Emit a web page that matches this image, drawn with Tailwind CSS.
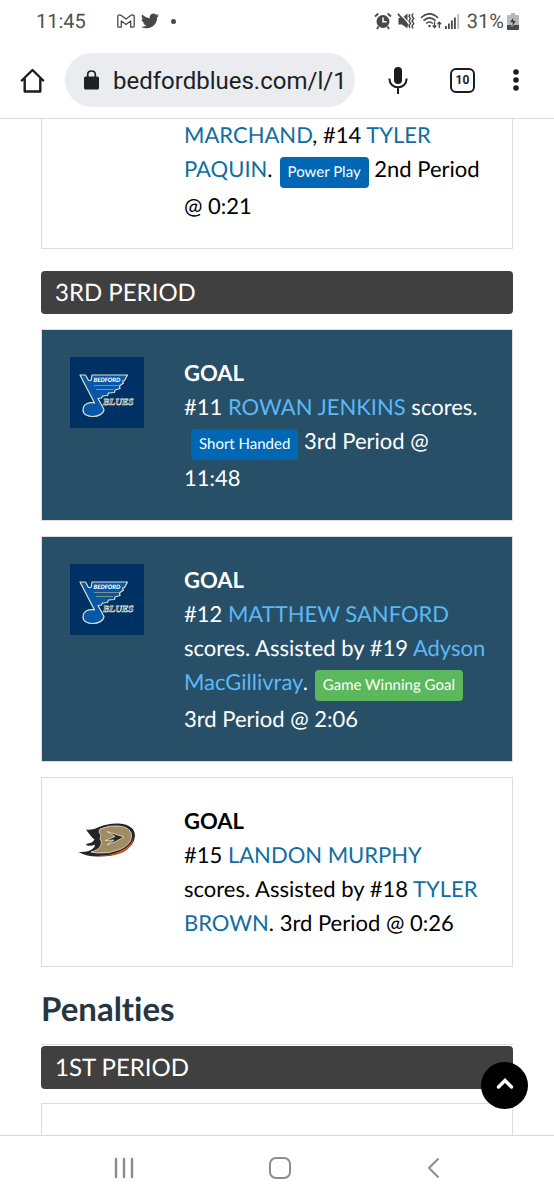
<!DOCTYPE html>
<html lang="en">
<head>
  <meta charset="UTF-8" />
  <meta name="viewport" content="width=device-width, initial-scale=1" />
  <title>Bedford Blues - Game Summary</title>
  <script src="https://cdn.jsdelivr.net/npm/@tailwindcss/browser@4"></script>
</head>
<body class="h-screen flex flex-col bg-white overflow-hidden font-['Lato',sans-serif] text-[22px] leading-[34px] text-black [text-rendering:geometricPrecision] [font-variant-ligatures:none]">
  <!-- Status bar -->
  <div class="flex items-center justify-between h-[42px] shrink-0 pl-9 pr-[35px] font-['Roboto',sans-serif] text-xl text-[#505050]">
    <div class="flex items-center">
      <span>11:45</span>
      <svg class="ml-[31px] w-[18px] h-[14px]" viewBox="0 0 18 14" fill="none" stroke="#484848" stroke-width="1.3" stroke-linejoin="round">
        <path d="M.8 3.2V12q0 1.2 1.2 1.2h2.3V7L9 10.500l4.700-3.500v6.200H16q1.200 0 1.200-1.200V3Q17.200.8 15.400.8q-.9 0-1.700.6L9 5 4.300 1.400Q2 0 .8 2z" />
      </svg>
      <svg class="ml-[6px] w-[18px] h-[18px]" viewBox="0 0 24 24" fill="#484848">
        <path d="M23.950 4.570a10 10 0 0 1-2.820.770 4.960 4.960 0 0 0 2.160-2.720 9.900 9.900 0 0 1-3.120 1.180 4.920 4.920 0 0 0-8.380 4.480C7.690 8.090 4.070 6.130 1.640 3.160a4.820 4.820 0 0 0-.670 2.480c0 1.710.870 3.210 2.190 4.100a4.900 4.900 0 0 1-2.230-.620v.060a4.920 4.920 0 0 0 3.950 4.830 5 5 0 0 1-2.210.080 4.940 4.940 0 0 0 4.600 3.420A9.870 9.870 0 0 1 0 19.540a14 14 0 0 0 7.550 2.210c9.050 0 14-7.500 14-13.980 0-.210 0-.420-.020-.630a9.940 9.940 0 0 0 2.460-2.550z" />
      </svg>
      <span class="ml-3 size-[5px] rounded-full bg-[#484848]"></span>
    </div>
    <div class="flex items-center">
      <!-- alarm -->
      <svg class="w-[18px] h-[18px]" viewBox="0 0 18 18" fill="none">
        <circle cx="9" cy="9.500" r="6.500" fill="#484848" />
        <path d="M9 5.500v4.300h3.500" stroke="#fff" stroke-width="1.500" />
        <path d="M1 4.500 4.300 1.500M17 4.500l-3.300-3M4.500 14.500 3 17M13.500 14.500 15 17" stroke="#484848" stroke-width="1.800" />
      </svg>
      <!-- muted, vibrate -->
      <svg class="ml-[5px] w-[18px] h-[18px]" viewBox="0 0 18 18" fill="none" stroke="#484848">
        <path d="M1.500 6H5l5.500-4.500v15L5 12.500H1.500z" fill="#484848" stroke="none" />
        <path d="m3 1.300 8.500 9.700" stroke="#fff" stroke-width="1.200" />
        <path d="m1 1.800 10 11.500" stroke-width="1.800" />
        <path d="m13 2-1 2.300 1.500 2.300L12 8.900l1.500 2.300-1.500 2.300 1 2.500M16 1.500 15 4l1.700 2.500L15 9l1.700 2.500L15 14l1 2.500" stroke-width="1.400" />
      </svg>
      <!-- wifi -->
      <svg class="ml-[5px] w-[22px] h-[18px]" viewBox="0 0 22 18" fill="none" stroke="#484848" stroke-width="1.600">
        <path d="M1 5.800q8.500-8 17 0M3.500 8.700q6-5.500 12 0M6.200 11.500q3.300-3 6.600 0" />
        <circle cx="9.500" cy="14" r="1.200" fill="#484848" stroke="none" />
        <path d="M14.500 9.500v6M12.700 13.500l1.800 2 1.800-2M19.300 16v-5.500M17.500 12.300l1.800-2 1.800 2" stroke-width="1.300" />
      </svg>
      <!-- signal -->
      <svg class="ml-[3px] w-[15px] h-[16px]" viewBox="0 0 15 16" fill="#484848">
        <path d="M0 13h1.800v3H0zM3 10.500h1.800V16H3zM6 7.500h1.800V16H6zM9 4.500h1.800V16H9z" />
        <path d="M12.300 1h1.800v15h-1.800z" fill="#bbb" />
      </svg>
      <span class="ml-[7px]">31%</span>
      <!-- battery -->
      <svg class="ml-[3px] w-[12px] h-[17px]" viewBox="0 0 12 17">
        <path d="M4 0h4v2h3q1 0 1 1v13q0 1-1 1H1q-1 0-1-1V3q0-1 1-1h3z" fill="#b8b8b8" />
        <path d="M0 12h12v4q0 1-1 1H1q-1 0-1-1z" fill="#484848" />
        <path d="M7 3.500 2.500 9.500h3L4.700 14l4.800-6.300H6.400z" fill="#303030" stroke="#ddd" stroke-width=".5" />
      </svg>
    </div>
  </div>

  <!-- Browser toolbar -->
  <header class="flex items-center h-[77px] shrink-0 pl-5 pr-[35px] border-b border-[#d8d8d8] font-['Roboto',sans-serif] text-[#202124]">
    <button type="button" aria-label="Home">
      <svg class="w-[25px] h-[25px]" viewBox="0 0 25 25" fill="none" stroke="#1b1c1e" stroke-width="2.400" stroke-linejoin="round" stroke-linecap="round">
        <path d="M1.800 12.500 12.500 2l10.700 10.500M4.700 10.500v13h15.600v-13" />
      </svg>
    </button>
    <div class="flex-1 min-w-0 flex items-center h-[54px] ml-5 pl-[19px] pr-2 rounded-full bg-[#ebecf0]">
      <svg class="shrink-0 w-[15px] h-[20px]" viewBox="0 0 15 20">
        <rect y="6.500" width="15" height="13" rx="1.500" fill="#202124" />
        <path d="M3.700 8V4.500q0-3.500 3.800-3.500t3.800 3.500V8" fill="none" stroke="#202124" stroke-width="1.700" />
      </svg>
      <input type="text" aria-label="Address" value="bedfordblues.com/l/1" class="flex-1 min-w-0 ml-[14px] pt-[2px] text-2xl bg-transparent outline-none" />
    </div>
    <button type="button" aria-label="Voice search" class="ml-[33px]">
      <svg class="w-[20px] h-[28px]" viewBox="0 0 20 28" fill="none" stroke="#1b1c1e" stroke-width="2">
        <rect x="6" y="1" width="8" height="17" rx="4" fill="#1b1c1e" stroke="none" />
        <path d="M1.500 12.500v1a8.500 7.800 0 0 0 17 0v-1M10 21.500V28" />
      </svg>
    </button>
    <button type="button" aria-label="Open tabs" class="ml-[42px] flex items-center justify-center size-[25px] rounded-[6px] border-2 border-[#1b1c1e] text-xs font-bold">10</button>
    <button type="button" aria-label="Menu" class="ml-[38px]">
      <svg class="w-[6px] h-[22px]" viewBox="0 0 6 22" fill="#1b1c1e">
        <circle cx="3" cy="3" r="2.800" /><circle cx="3" cy="11" r="2.800" /><circle cx="3" cy="19" r="2.800" />
      </svg>
    </button>
  </header>

  <!-- Page content -->
  <div class="relative flex-1 min-h-0">
    <main class="h-full overflow-hidden px-[41px]">
      <div class="flex -mt-px pl-[28px] pr-[25px] pb-[25px] border border-t-0 border-[#ddd]">
        <div class="w-[114px] shrink-0"></div>
        <p><a href="#" class="text-[#0f6e9f]">MARCHAND</a>, #14 <a href="#" class="text-[#0f6e9f]">TYLER PAQUIN</a>.<span class="inline-block ml-[7px] mb-px px-2 rounded-sm bg-[#0067b5] text-white text-[15px] leading-[31px]">Power Play</span> 2nd Period @ 0:21</p>
      </div>

      <h3 class="mt-[22px] px-[14px] py-1 text-2xl leading-[35px] rounded-sm bg-[#404040] text-white">3RD PERIOD</h3>

      <div class="flex mt-[15px] pl-[28px] pr-[25px] pt-[26px] pb-[25px] border border-[#ddd] bg-[#284f68] text-white">
        <div class="w-[114px] shrink-0 pt-px">
          <svg class="w-[74px] h-[71px]" viewBox="0 0 74 71">
            <defs>
              <g id="blues">
                <rect width="74" height="71" fill="#003164" />
                <path d="M10 18h5.500l3 5.500 2.500 0 1-5.500h35.500l-3 5.500-2 .5 1 2-4 3 .5 2.500-5 1.500-.5 2.500-6 .5-1 2.500-5 .5-1 2-3.500.5 6 11c-1 9-21 9.500-21 .5 0-6 6-8.500 11.500-7z" fill="#0757a8" stroke="#dfe3c2" stroke-width="1.200" stroke-linejoin="round" />
                <path d="M24 28.500h25M26 32.500h17" stroke="#a9ae80" stroke-width=".7" />
                <text x="23.500" y="24.500" font-family="Lato, sans-serif" font-size="6" font-weight="900" font-style="italic" fill="#fff">BEDFORD</text>
                <text x="33" y="47.500" font-family="Liberation Serif, serif" font-size="9.500" font-weight="700" font-style="italic" fill="#12385e" stroke="#d9ddc8" stroke-width=".7">BLUES</text>
              </g>
            </defs>
            <use href="#blues" />
          </svg>
        </div>
        <div>
          <h4 class="font-bold">GOAL</h4>
          <p>#11 <a href="#" class="text-[#5bb8f5]">ROWAN JENKINS</a> scores.<span class="inline-block ml-[7px] mb-px px-2 rounded-sm bg-[#0067b5] text-white text-[15px] leading-[31px]">Short Handed</span> 3rd Period @ 11:48</p>
        </div>
      </div>

      <div class="flex mt-[15px] pl-[28px] pr-[25px] pt-[26px] pb-[25px] border border-[#ddd] bg-[#284f68] text-white">
        <div class="w-[114px] shrink-0 pt-px">
          <svg class="w-[74px] h-[71px]" viewBox="0 0 74 71"><use href="#blues" /></svg>
        </div>
        <div>
          <h4 class="font-bold">GOAL</h4>
          <p>#12 <a href="#" class="text-[#5bb8f5]">MATTHEW SANFORD</a> scores. Assisted by #19 <a href="#" class="text-[#5bb8f5]">Adyson MacGillivray</a>.<span class="inline-block ml-[7px] mb-px px-2 rounded-sm bg-[#5cb85c] text-white text-[15px] leading-[31px]">Game Winning Goal</span> 3rd Period @ 2:06</p>
        </div>
      </div>

      <div class="flex mt-[15px] pl-[28px] pr-[25px] py-[26px] border border-[#ddd]">
        <div class="w-[114px] shrink-0 pt-px">
          <svg class="w-[74px] h-[71px]" viewBox="0 0 74 71">
            <path d="M16 24.500q7 1 13-2.500 9-4 20-3.500Q65 20 65 31 64 41 53 47q-12 5-26 4.500-10 0-18.500-4.500 10 .5 14.500-3.500 2-2 2-4-3 2-8 1l-1-1.500q7-1 8.500-4.500-3-2-8.500-10z" fill="#262225" />
            <path d="M27 50.500q12 .5 23-4.500 13-6 13.500-15 .5 11-12 17-11 4.500-24.500 2.500z" fill="#c9502b" />
            <path d="M30 24q9-4 19-3 13 1.500 12.500 10.500Q61 39 51 44q-11 5-24 4l-6-1q8-2 10-7 1-4-1-6 2-4-1-7z" fill="#a18c61" stroke="#e8e2d2" stroke-width=".8" />
            <path d="m37 26.500 17 5.500q-8 5-17 8l7-5-9 .500 10-4z" fill="#2c2728" stroke="#e8e2d2" stroke-width=".8" />
          </svg>
        </div>
        <div>
          <h4 class="font-bold">GOAL</h4>
          <p>#15 <a href="#" class="text-[#0f6e9f]">LANDON MURPHY</a> scores. Assisted by #18 <a href="#" class="text-[#0f6e9f]">TYLER BROWN</a>. 3rd Period @ 0:26</p>
        </div>
      </div>

      <h2 class="pt-[21px] pb-[14px] border-b border-[#ddd] text-[33px] leading-[42px] font-bold text-[#263640]">Penalties</h2>
      <h3 class="mt-px px-[14px] py-1 text-2xl leading-[35px] rounded-sm bg-[#404040] text-white">1ST PERIOD</h3>
      <div class="mt-[14px] h-24 border border-[#ddd]"></div>
    </main>
    <button type="button" aria-label="Back to top" class="absolute right-[26px] bottom-[26px] flex items-center justify-center size-[47px] rounded-full bg-black">
      <svg class="w-[18px] h-[18px]" viewBox="0 0 18 18" fill="none" stroke="#fff" stroke-width="3.400" stroke-linecap="round">
        <path d="m2.500 10 6.500-6.500 6.500 6.500" />
      </svg>
    </button>
  </div>

  <!-- System navigation -->
  <nav class="flex items-center justify-between h-[65px] shrink-0 px-[113px] border-t border-[#d8d8d8] bg-white">
    <button type="button" aria-label="Recent apps">
      <svg class="w-[22px] h-[22px]" viewBox="0 0 22 22" stroke="#8c8c8c" stroke-width="2.400" stroke-linecap="round"><path d="M3 2v18M11 2v18M19 2v18" /></svg>
    </button>
    <button type="button" aria-label="Home screen">
      <svg class="w-[22px] h-[22px]" viewBox="0 0 22 22" fill="none" stroke="#8c8c8c" stroke-width="2"><rect x="1" y="1" width="20" height="20" rx="6" /></svg>
    </button>
    <button type="button" aria-label="Back">
      <svg class="w-[17px] h-[22px]" viewBox="0 0 17 22" fill="none" stroke="#8c8c8c" stroke-width="2"><path d="M14.500 1.500 5 11l9.500 9.500" /></svg>
    </button>
  </nav>
</body>
</html>
